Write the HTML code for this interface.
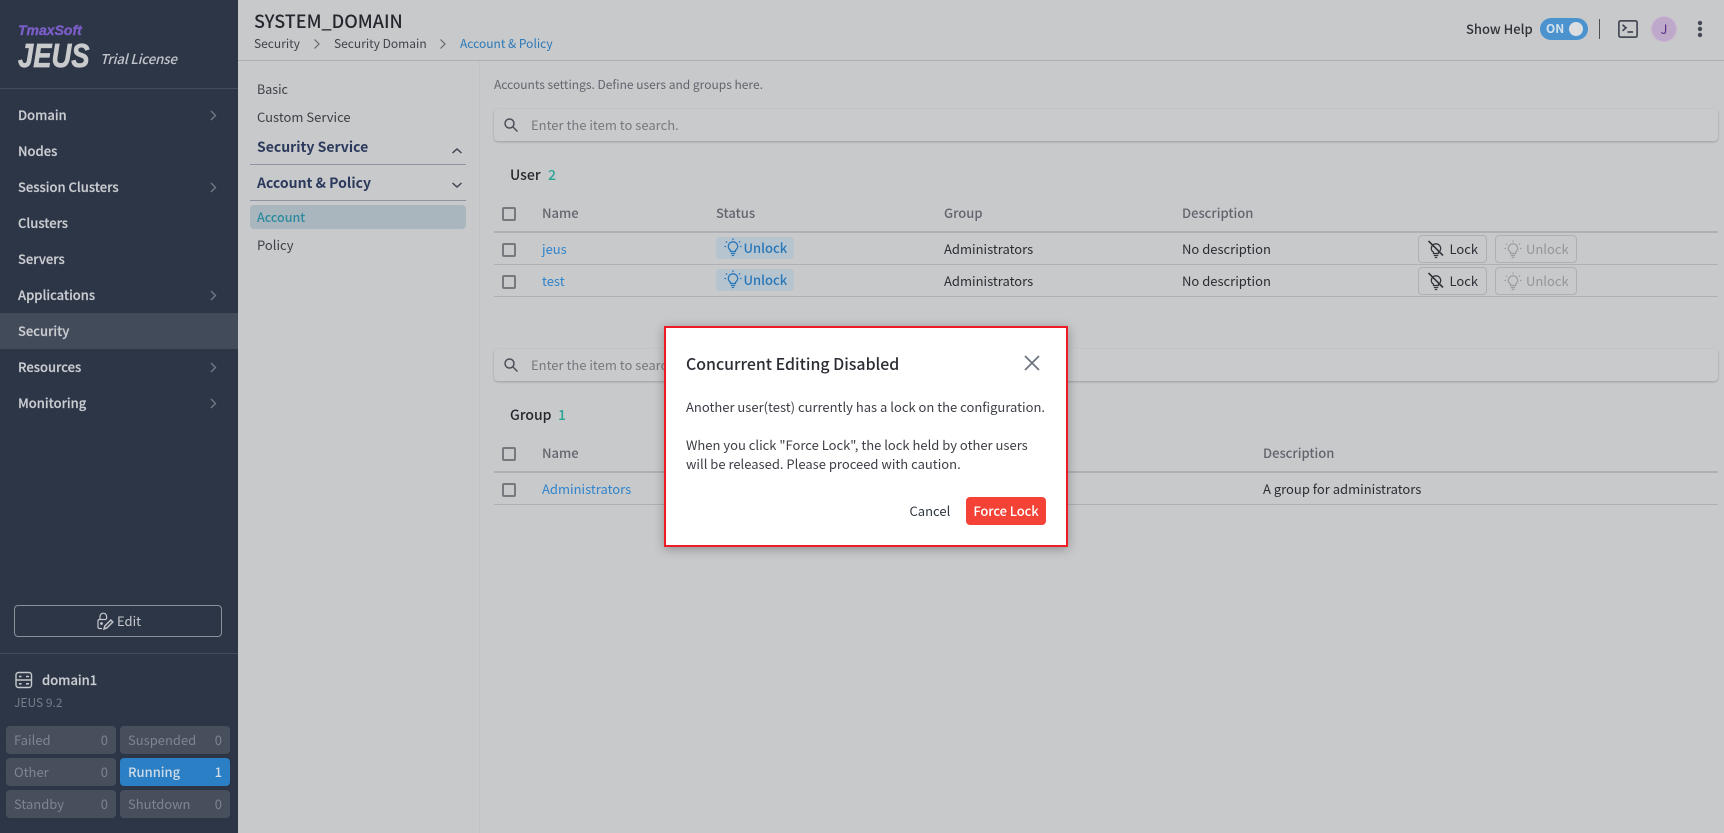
<!DOCTYPE html>
<html><head><meta charset="utf-8"><title>JEUS</title>
<style>
*{box-sizing:border-box}
html,body{margin:0;padding:0;width:1724px;height:833px;overflow:hidden;background:#c8c9cb}
body{font-family:"Liberation Sans","Noto Sans CJK KR",sans-serif;position:relative}
body,.t{font-family:"Noto Sans CJK KR","Liberation Sans",sans-serif}
.t{position:absolute;white-space:nowrap;line-height:20px;font-size:13px;color:#2a2d33}
.b{position:absolute}
svg{position:absolute;overflow:visible}
.nav{left:18px;font-size:13px;font-weight:500;color:#c9ccd0;-webkit-text-stroke:.2px #c9ccd0}
.st{position:absolute;width:110px;height:28px;background:#474f5d;border-radius:4px;color:#7e8591;font-size:13px;line-height:27px;padding:0 8px;display:flex;justify-content:space-between}
.th{font-size:13px;font-weight:500;color:#62656e}
.cb{position:absolute;left:502px;width:14px;height:14px;border:2px solid #77797f;border-radius:2px}
.link{color:#2f84cc}
.badge{position:absolute;left:716px;width:78px;height:22px;background:#b6c4d0;border-radius:4px}
.btn{position:absolute;height:28px;border:1px solid #aeb0b5;border-radius:4px}
.srch{position:absolute;left:494px;width:1224px;height:32px;border-radius:4px;background:#c9cacc;box-shadow:0 1px 2px rgba(0,0,0,.22)}
</style></head><body>

<!-- sidebar -->
<div class="b" style="left:0;top:0;width:238px;height:833px;background:#2d3646"></div>
<div class="t" style="left:18px;top:20px;font-family:'Liberation Sans',sans-serif;font-size:14px;font-weight:700;font-style:italic;color:#7a5dc7;-webkit-text-stroke:.4px #7a5dc7">TmaxSoft</div>
<div class="t" style="left:18px;top:41px;font-family:'Liberation Sans',sans-serif;font-size:33px;line-height:30px;font-weight:700;font-style:italic;color:#c9cacc;transform:scaleX(.83);transform-origin:left;-webkit-text-stroke:.7px #c9cacc">JEUS</div>
<div class="t" style="left:100px;top:48px;font-size:13.5px;letter-spacing:-.25px;font-style:italic;font-weight:500;color:#c0c4ca">Trial License</div>
<div class="b" style="left:0;top:88px;width:238px;height:1px;background:#434c5a"></div>

<div class="b" style="left:0;top:313px;width:238px;height:36px;background:#424b5a"></div>
<div class="t nav" style="top:105px">Domain</div>
<div class="t nav" style="top:141px">Nodes</div>
<div class="t nav" style="top:177px">Session Clusters</div>
<div class="t nav" style="top:213px">Clusters</div>
<div class="t nav" style="top:249px">Servers</div>
<div class="t nav" style="top:285px">Applications</div>
<div class="t nav" style="top:321px">Security</div>
<div class="t nav" style="top:357px">Resources</div>
<div class="t nav" style="top:393px">Monitoring</div>
<svg style="left:0;top:0" width="238" height="420" fill="none" stroke="#717986" stroke-width="1.4">
<path d="M211 111l4.500 4.500-4.500 4.500M211 183l4.500 4.500-4.500 4.500M211 291l4.500 4.500-4.500 4.500M211 363l4.500 4.500-4.500 4.500M211 399l4.500 4.500-4.500 4.500"/>
</svg>

<div class="b" style="left:14px;top:605px;width:208px;height:32px;border:1px solid #8b919b;border-radius:4px"></div>
<svg style="left:95px;top:612px" width="18" height="18" fill="none" stroke="#c4c7cc" stroke-width="1.2">
<path d="M3 8.500V15q0 1.500 1.500 1.500H7M11 7.500H4.500Q3 7.500 3 9M5 7.500V4.500a3.300 3.300 0 0 1 6.600 0v3"/><circle cx="6.500" cy="11.500" r=".8" fill="#c4c7cc"/><path d="M9 17l.8-3 6-6 2 2-6 6z" stroke-width="1.500"/>
</svg>
<div class="t" style="left:117px;top:611px;font-size:13px;color:#c6c9cd">Edit</div>
<div class="b" style="left:0;top:653px;width:238px;height:1px;background:#434c5a"></div>

<svg style="left:15px;top:671px" width="18" height="18" fill="none" stroke="#c4c7cc" stroke-width="1.400">
<rect x="1" y="1.500" width="15.500" height="15" rx="2.500"/><path d="M1 9h15.500M4 5.500h2.500M4 12.800h2.500M11 5.500h3M11 12.800h3" stroke-width="1.600"/>
</svg>
<div class="t" style="left:42px;top:670px;font-size:13px;font-weight:500;color:#c9ccd0;-webkit-text-stroke:.2px #c9ccd0">domain1</div>
<div class="t" style="left:14px;top:693px;font-size:12px;color:#767d8a">JEUS 9.2</div>

<div class="st" style="left:6px;top:726px"><span>Failed</span><span>0</span></div>
<div class="st" style="left:120px;top:726px"><span>Suspended</span><span>0</span></div>
<div class="st" style="left:6px;top:758px"><span>Other</span><span>0</span></div>
<div class="st" style="left:120px;top:758px;background:#2b7fc5;color:#cfdbe6;font-weight:500"><span>Running</span><span>1</span></div>
<div class="st" style="left:6px;top:790px"><span>Standby</span><span>0</span></div>
<div class="st" style="left:120px;top:790px"><span>Shutdown</span><span>0</span></div>

<!-- header -->
<div class="b" style="left:238px;top:60px;width:1486px;height:1px;background:#aeb0b4"></div>
<div class="t" style="left:254px;top:11px;font-size:18px;font-weight:500;color:#24272d">SYSTEM_DOMAIN</div>
<div class="t" style="left:254px;top:34px;font-size:12px;color:#3f4249">Security</div>
<div class="t" style="left:334px;top:34px;font-size:12px;color:#3f4249">Security Domain</div>
<div class="t" style="left:460px;top:34px;font-size:12px;color:#2a78b8">Account &amp; Policy</div>
<svg style="left:0;top:0" width="480" height="60" fill="none" stroke="#63666d" stroke-width="1.200">
<path d="M314.500 39.500l4.500 4.500-4.500 4.500M440.500 39.500l4.500 4.500-4.500 4.500"/>
</svg>

<div class="t" style="left:1466px;top:19px;font-size:13px;font-weight:500;color:#2f3238">Show Help</div>
<div class="b" style="left:1540px;top:18px;width:48px;height:22px;border-radius:11px;background:#4a93ce"></div>
<div class="t" style="left:1546px;top:19px;font-size:12px;font-weight:700;color:#d5e2ec">ON</div>
<div class="b" style="left:1569px;top:22px;width:14px;height:14px;border-radius:50%;background:#dcdde0"></div>
<div class="b" style="left:1599px;top:19px;width:1px;height:20px;background:#4b4e55"></div>
<svg style="left:1618px;top:20px" width="20" height="18" fill="none" stroke="#444a56" stroke-width="1.700">
<rect x=".9" y=".9" width="18.200" height="16.200" rx="1.500"/><path d="M4.500 4.800l3.500 3-3.500 3M9.500 12h5.500"/>
</svg>
<div class="b" style="left:1651px;top:16px;width:26px;height:26px;border-radius:50%;background:#bfa9cb;border:1px solid #c9b6d4"></div>
<div class="t" style="left:1651px;top:19px;width:26px;text-align:center;font-size:13px;color:#5c2e86">J</div>
<svg style="left:1696px;top:20px" width="8" height="18" fill="#444a56"><circle cx="4" cy="3" r="2.200"/><circle cx="4" cy="9" r="2.200"/><circle cx="4" cy="15" r="2.200"/></svg>

<!-- secondary nav -->
<div class="b" style="left:479px;top:61px;width:1px;height:772px;background:#c2c3c6"></div>
<div class="t" style="left:257px;top:79px;font-size:12.500px;color:#3c3f46">Basic</div>
<div class="t" style="left:257px;top:107px;font-size:13px;color:#3c3f46">Custom Service</div>
<div class="t" style="left:257px;top:137px;font-size:14px;font-weight:700;color:#2b3a5c">Security Service</div>
<div class="b" style="left:250px;top:164px;width:216px;height:1px;background:#8f93a3"></div>
<div class="t" style="left:257px;top:173px;font-size:14px;font-weight:700;color:#2b3a5c">Account &amp; Policy</div>
<div class="b" style="left:250px;top:200px;width:216px;height:1px;background:#8f93a3"></div>
<svg style="left:0;top:0" width="480" height="200" fill="none" stroke="#3f4552" stroke-width="1.500">
<path d="M452.500 153l4.500-4 4.500 4M452.500 183l4.500 4 4.500-4"/>
</svg>
<div class="b" style="left:250px;top:205px;width:216px;height:24px;border-radius:4px;background:#aab6bd"></div>
<div class="t" style="left:257px;top:207px;font-size:12.500px;font-weight:500;color:#2b8a9e">Account</div>
<div class="t" style="left:257px;top:235px;font-size:13px;color:#3c3f46">Policy</div>

<!-- main -->
<div class="t" style="left:494px;top:75px;font-size:12px;color:#62656e">Accounts settings. Define users and groups here.</div>
<div class="srch" style="top:109px"></div>
<svg style="left:504px;top:118px" width="14" height="14" fill="none" stroke="#4d5058" stroke-width="1.500"><circle cx="5.500" cy="5.500" r="4.500"/><path d="M9 9l4.500 4.500"/></svg>
<div class="t" style="left:531px;top:115px;font-size:13px;color:#77797f">Enter the item to search.</div>

<div class="t" style="left:510px;top:165px;font-size:14px;font-weight:500;color:#24272d">User</div>
<div class="t" style="left:548px;top:165px;font-size:14px;font-weight:500;color:#2aa596">2</div>
<div class="cb" style="top:207px"></div>
<div class="t th" style="left:542px;top:203px">Name</div>
<div class="t th" style="left:716px;top:203px">Status</div>
<div class="t th" style="left:944px;top:203px">Group</div>
<div class="t th" style="left:1182px;top:203px">Description</div>
<div class="b" style="left:494px;top:231px;width:1224px;height:2px;background:#aeb0b5"></div>

<div class="cb" style="top:243px"></div>
<div class="t link" style="left:542px;top:239px">jeus</div>
<div class="badge" style="top:237px"></div>
<svg style="left:725px;top:238px" width="16" height="20" fill="none" stroke="#2676b8" stroke-width="1.300"><path d="M5.500 13.500v-1.300C3.800 11 3.300 9.800 3.300 8.500a4.700 4.700 0 0 1 9.400 0c0 1.300-.5 2.500-2.200 3.700v1.300zM5.800 15.500h4.400M6.800 17.500h2.400M8 .5v1.500M1 3.500l1 1M15 3.500l-1 1M-.5 8.500h1.500M15 8.500h1.500"/></svg>
<div class="t" style="left:743.500px;top:238px;font-size:13px;font-weight:500;color:#2676b8">Unlock</div>
<div class="t" style="left:944px;top:239px">Administrators</div>
<div class="t" style="left:1182px;top:239px">No description</div>
<div class="btn" style="left:1418px;top:235px;width:69px"></div>
<svg style="left:1428px;top:240px" width="16" height="20" fill="none" stroke="#33363c" stroke-width="1.300"><path d="M5.500 13.500v-1.300C3.800 11 3.300 9.800 3.300 8.500a4.700 4.700 0 0 1 9.400 0c0 1.300-.5 2.500-2.200 3.700v1.300zM5.800 15.500h4.400M6.800 17.500h2.400"/><path d="M.5 1l14.500 14.500" stroke-width="1.600"/></svg>
<div class="t" style="left:1449.500px;top:239px;font-size:13px;color:#2a2d33">Lock</div>
<div class="btn" style="left:1495px;top:235px;width:82px"></div>
<svg style="left:1505px;top:240px" width="16" height="20" fill="none" stroke="#9a9ca1" stroke-width="1.200"><path d="M5.500 13.500v-1.300C3.800 11 3.300 9.800 3.300 8.500a4.700 4.700 0 0 1 9.400 0c0 1.300-.5 2.500-2.200 3.700v1.300zM5.800 15.500h4.400M6.800 17.500h2.400M8 .5v1.500M1 3.500l1 1M15 3.500l-1 1M-.5 8.500h1.500M15 8.500h1.500"/></svg>
<div class="t" style="left:1526px;top:239px;font-size:13px;color:#93959b">Unlock</div>
<div class="b" style="left:494px;top:264px;width:1224px;height:1px;background:#aeb0b5"></div>

<div class="cb" style="top:275px"></div>
<div class="t link" style="left:542px;top:271px">test</div>
<div class="badge" style="top:269px"></div>
<svg style="left:725px;top:270px" width="16" height="20" fill="none" stroke="#2676b8" stroke-width="1.300"><path d="M5.500 13.500v-1.300C3.800 11 3.300 9.800 3.300 8.500a4.700 4.700 0 0 1 9.400 0c0 1.300-.5 2.500-2.200 3.700v1.300zM5.800 15.500h4.400M6.800 17.500h2.400M8 .5v1.500M1 3.500l1 1M15 3.500l-1 1M-.5 8.500h1.500M15 8.500h1.500"/></svg>
<div class="t" style="left:743.500px;top:270px;font-size:13px;font-weight:500;color:#2676b8">Unlock</div>
<div class="t" style="left:944px;top:271px">Administrators</div>
<div class="t" style="left:1182px;top:271px">No description</div>
<div class="btn" style="left:1418px;top:267px;width:69px"></div>
<svg style="left:1428px;top:272px" width="16" height="20" fill="none" stroke="#33363c" stroke-width="1.300"><path d="M5.500 13.500v-1.300C3.800 11 3.300 9.800 3.300 8.500a4.700 4.700 0 0 1 9.400 0c0 1.300-.5 2.500-2.200 3.700v1.300zM5.800 15.500h4.400M6.800 17.500h2.400"/><path d="M.5 1l14.500 14.500" stroke-width="1.600"/></svg>
<div class="t" style="left:1449.500px;top:271px;font-size:13px;color:#2a2d33">Lock</div>
<div class="btn" style="left:1495px;top:267px;width:82px"></div>
<svg style="left:1505px;top:272px" width="16" height="20" fill="none" stroke="#9a9ca1" stroke-width="1.200"><path d="M5.500 13.500v-1.300C3.800 11 3.300 9.800 3.300 8.500a4.700 4.700 0 0 1 9.400 0c0 1.300-.5 2.500-2.200 3.700v1.300zM5.800 15.500h4.400M6.800 17.500h2.400M8 .5v1.500M1 3.500l1 1M15 3.500l-1 1M-.5 8.500h1.500M15 8.500h1.500"/></svg>
<div class="t" style="left:1526px;top:271px;font-size:13px;color:#93959b">Unlock</div>
<div class="b" style="left:494px;top:296px;width:1224px;height:1px;background:#aeb0b5"></div>

<div class="srch" style="top:349px"></div>
<svg style="left:504px;top:358px" width="14" height="14" fill="none" stroke="#4d5058" stroke-width="1.500"><circle cx="5.500" cy="5.500" r="4.500"/><path d="M9 9l4.500 4.500"/></svg>
<div class="t" style="left:531px;top:355px;font-size:13px;color:#77797f">Enter the item to search.</div>

<div class="t" style="left:510px;top:405px;font-size:14px;font-weight:500;color:#24272d">Group</div>
<div class="t" style="left:558px;top:405px;font-size:14px;font-weight:500;color:#2aa596">1</div>
<div class="cb" style="top:447px"></div>
<div class="t th" style="left:542px;top:443px">Name</div>
<div class="t th" style="left:1263px;top:443px">Description</div>
<div class="b" style="left:494px;top:471px;width:1224px;height:2px;background:#aeb0b5"></div>
<div class="cb" style="top:483px"></div>
<div class="t link" style="left:542px;top:479px">Administrators</div>
<div class="t" style="left:1263px;top:479px">A group for administrators</div>
<div class="b" style="left:494px;top:504px;width:1224px;height:1px;background:#aeb0b5"></div>

<!-- modal -->
<div class="b" style="left:664px;top:326px;width:404px;height:221px;background:#fff;border:2px solid #ee1c25;box-shadow:0 2px 10px rgba(0,0,0,.3)"></div>
<div class="t" style="left:686px;top:354px;font-size:15.900px;font-weight:500;color:#2b2e34">Concurrent Editing Disabled</div>
<svg style="left:1024px;top:355px" width="16" height="16" fill="none" stroke="#6f7682" stroke-width="1.800"><path d="M1 1l14 14M15 1L1 15"/></svg>
<div class="t" style="left:686px;top:397px;font-size:13px;color:#3c3f46">Another user(test) currently has a lock on the configuration.</div>
<div class="t" style="left:686px;top:435px;font-size:13px;color:#3c3f46">When you click "Force Lock", the lock held by other users</div>
<div class="t" style="left:686px;top:454px;font-size:13px;color:#3c3f46">will be released. Please proceed with caution.</div>
<div class="t" style="left:909.500px;top:501px;font-size:13px;color:#2f3640">Cancel</div>
<div class="b" style="left:966px;top:497px;width:80px;height:28px;background:#f44336;border-radius:4px"></div>
<div class="t" style="left:966px;top:501px;width:80px;text-align:center;font-size:13px;font-weight:500;letter-spacing:-.1px;color:#fff">Force Lock</div>
</body></html>
